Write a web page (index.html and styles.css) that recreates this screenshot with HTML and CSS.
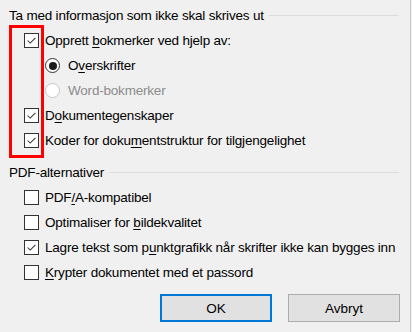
FILE: index.html
```html
<!DOCTYPE html>
<html lang="no">
<head>
    <meta charset="UTF-8">
    <title>Alternativer</title>
    <link rel="stylesheet" href="styles.css">
</head>
<body>
    <div class="dialog">
        <div class="group-title"><span>Ta med informasjon som ikke skal skrives ut</span><span class="rule"></span></div>
        <div class="group">
            <div class="row">
                <span class="box checked"><svg viewBox="0 0 15 15"><path d="M3 7.5 L6 10.5 L12 4.5"/></svg></span>
                <span>Opprett <u>b</u>okmerker ved hjelp av:</span>
            </div>
            <div class="row sub">
                <span class="radio on"></span>
                <span>O<u>v</u>erskrifter</span>
            </div>
            <div class="row sub disabled">
                <span class="radio"></span>
                <span>Word-bokmerker</span>
            </div>
            <div class="row">
                <span class="box checked"><svg viewBox="0 0 15 15"><path d="M3 7.5 L6 10.5 L12 4.5"/></svg></span>
                <span>D<u>o</u>kumentegenskaper</span>
            </div>
            <div class="row">
                <span class="box checked"><svg viewBox="0 0 15 15"><path d="M3 7.5 L6 10.5 L12 4.5"/></svg></span>
                <span>Koder for doku<u>m</u>entstruktur for tilgjengelighet</span>
            </div>
            <div class="highlight"></div>
        </div>

        <div class="group-title second"><span>PDF-alternativer</span><span class="rule"></span></div>
        <div class="group">
            <div class="row">
                <span class="box"></span>
                <span>PDF<u>/</u>A-kompatibel</span>
            </div>
            <div class="row">
                <span class="box"></span>
                <span>Optimaliser for <u>b</u>ildekvalitet</span>
            </div>
            <div class="row">
                <span class="box checked"><svg viewBox="0 0 15 15"><path d="M3 7.5 L6 10.5 L12 4.5"/></svg></span>
                <span>Lagre tekst som p<u>u</u>nktgrafikk når skrifter ikke kan bygges inn</span>
            </div>
            <div class="row">
                <span class="box"></span>
                <span><u>K</u>rypter dokumentet med et passord</span>
            </div>
        </div>

        <div class="buttons">
            <button class="btn default">OK</button>
            <button class="btn">Avbryt</button>
        </div>
    </div>
</body>
</html>
```

FILE: styles.css
```css
body {
    margin: 0;
    padding: 0;
    background: #f0f0f0;
    font-family: 'Liberation Sans', Arial, sans-serif;
    font-size: 13.5px;
    letter-spacing: -0.2px;
    color: #000;
}
.dialog {
    width: 411px;
    height: 332px;
    border-right: 1px solid #c9c9c9;
    padding-top: 2px;
    box-sizing: border-box;
}
.group-title {
    display: flex;
    align-items: center;
    height: 26px;
    padding: 0 11px 0 9px;
}
.group-title.second {
    margin-top: 6px;
}
.group-title .rule {
    flex: 1;
    border-top: 1px solid #dcdcdc;
    margin-left: 5px;
}
.group {
    position: relative;
}
.row {
    display: flex;
    align-items: center;
    height: 25px;
    padding-left: 24px;
    gap: 6px;
    white-space: nowrap;
}
.row.sub {
    padding-left: 45px;
    gap: 8px;
}
.row.disabled {
    color: #8c8c8c;
}
u {
    text-decoration-thickness: 1px;
    text-underline-offset: 2px;
}
.box {
    width: 15px;
    height: 15px;
    box-sizing: border-box;
    border: 1px solid #333;
    background: #fff;
    flex: none;
}
.box svg {
    display: block;
    width: 13px;
    height: 13px;
    fill: none;
    stroke: #333;
    stroke-width: 1.2;
}
.radio {
    width: 15px;
    height: 15px;
    box-sizing: border-box;
    border: 1px solid #333;
    border-radius: 50%;
    background: #fff;
    flex: none;
    display: flex;
    align-items: center;
    justify-content: center;
}
.radio.on::after {
    content: "";
    width: 8px;
    height: 8px;
    border-radius: 50%;
    background: #1a1a1a;
}
.disabled .radio {
    border-color: #c8c8c8;
}
.highlight {
    position: absolute;
    left: 9px;
    top: -3px;
    width: 35px;
    height: 133px;
    box-sizing: border-box;
    border: 3px solid #f00;
}
.buttons {
    display: flex;
    justify-content: flex-end;
    gap: 16px;
    padding-right: 10px;
    margin-top: 9px;
}
.btn {
    width: 112px;
    height: 28px;
    background: #e1e1e1;
    border: 1px solid #adadad;
    font-family: 'Liberation Sans', Arial, sans-serif;
    font-size: 13.5px;
    color: #000;
    padding: 0;
}
.btn.default {
    border: 2px solid #0078d7;
}
```
